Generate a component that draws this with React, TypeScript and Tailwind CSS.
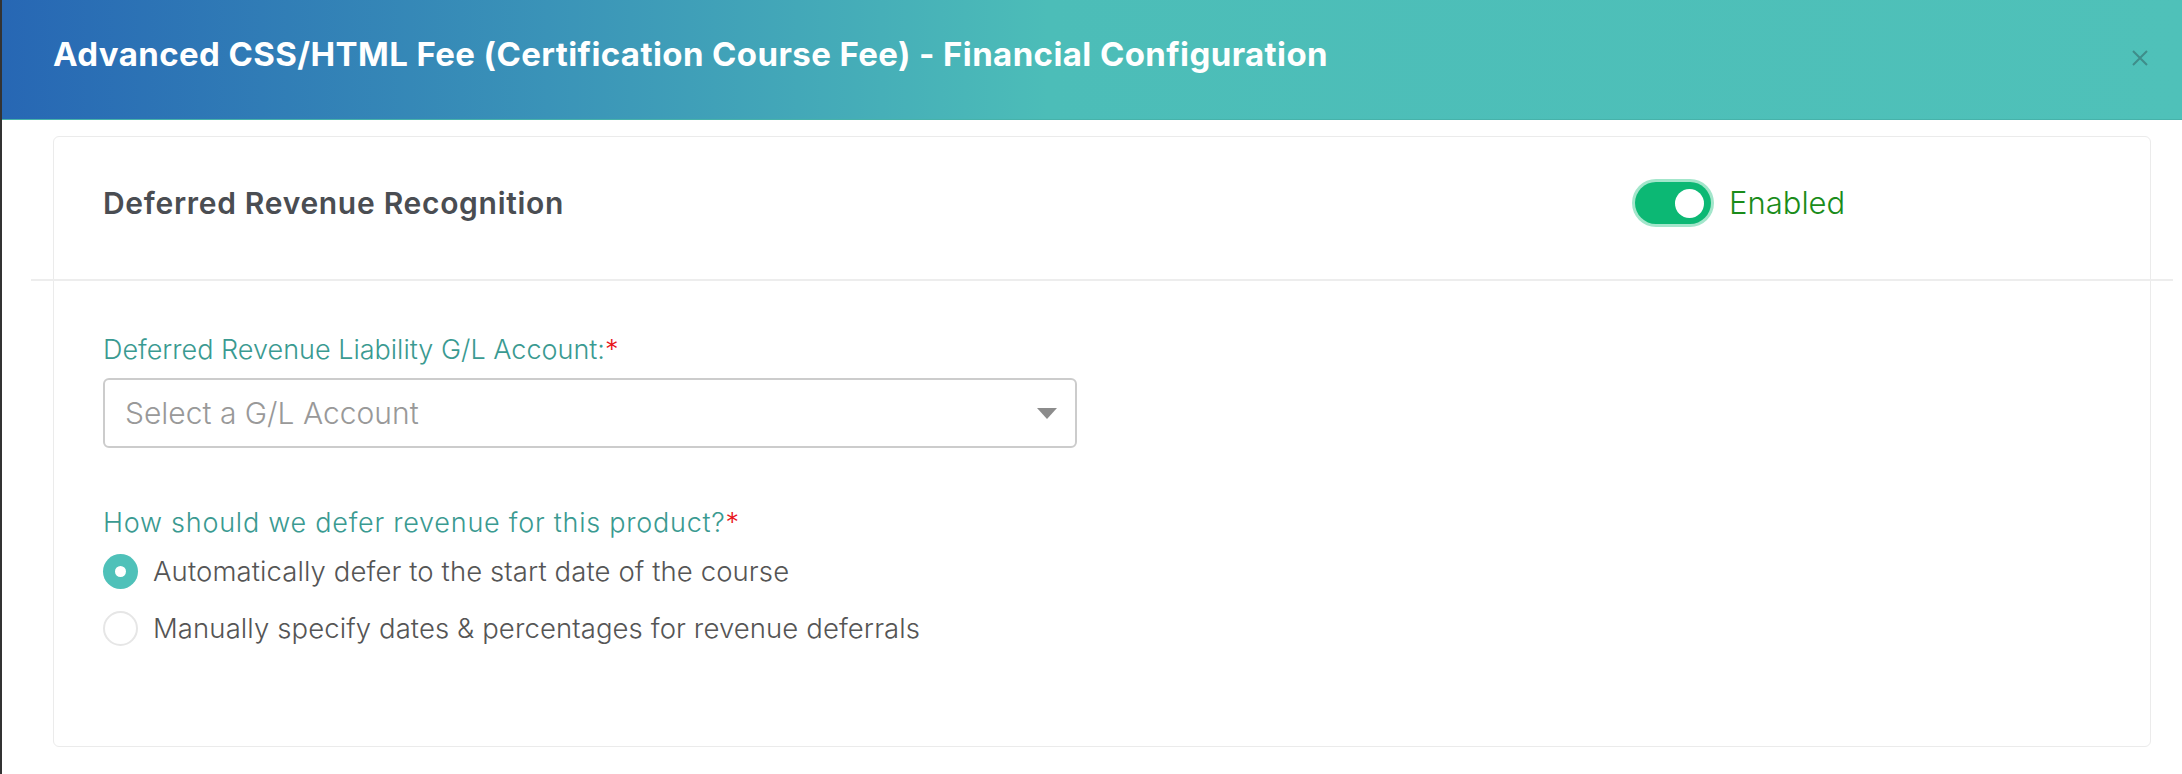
const font = { fontFamily: "Inter, 'Open Sans', sans-serif" };

function Toggle() {
  return (
    <div className="flex items-center">
      <div className="flex h-[42px] w-[76px] items-center justify-end rounded-full bg-[#0cb874] pr-[7px] ring-[3px] ring-[#a3e6cb]">
        <div className="h-[29px] w-[29px] rounded-full bg-white" />
      </div>
      <span className="ml-[18px] text-[31px] font-light leading-[40px] text-[#1a8c1a]">Enabled</span>
    </div>
  );
}

function Radio({ checked, label }: { checked?: boolean; label: string }) {
  return (
    <label className="flex h-[36px] items-center">
      {checked ? (
        <span className="flex h-[35px] w-[35px] items-center justify-center rounded-full bg-[#4fc1b9]">
          <span className="h-[11px] w-[11px] rounded-full bg-white" />
        </span>
      ) : (
        <span className="h-[35px] w-[35px] rounded-full border-2 border-[#e6e6e6]" />
      )}
      <span className="ml-[15px] text-[27.5px] font-light leading-[36px] tracking-[0.1px] text-[#555]">
        {label}
      </span>
    </label>
  );
}

export default function App() {
  return (
    <div className="min-h-[774px] w-full border-l-2 border-[#333] bg-white" style={font}>
      <header className="flex h-[120px] items-center justify-between border-b border-[#47b2aa] bg-[linear-gradient(to_right,#2767b4_0%,#3a93b8_25%,#4cbdb8_48%,#4fc1b9_100%)] pb-[12px] pl-[51px] pr-[34px]">
        <h1 className="text-[33px] font-bold leading-[44px] tracking-[0.4px] text-white">
          Advanced CSS/HTML Fee (Certification Course Fee) - Financial Configuration
        </h1>
        <svg width="16" height="16" viewBox="0 0 16 16" className="mt-[8px]">
          <path d="M1 1 L15 15 M15 1 L1 15" stroke="#3f8d8a" strokeWidth="2" />
        </svg>
      </header>

      <div className="pl-[51px] pr-[31px] pt-[16px]">
        <section className="h-[611px] rounded-[6px] border border-[#ebebeb]">
          <div className="grid h-[142px] grid-cols-[1532px_1fr] items-center pb-[10px] pl-[49px]">
            <h2 className="text-[30px] font-semibold leading-[40px] tracking-[0.7px] text-[#4a4d52]">
              Deferred Revenue Recognition
            </h2>
            <Toggle />
          </div>
          <div className="-mx-[23px] h-[2px] bg-[#ededed]" />

          <div className="pl-[49px] pt-[51px]">
            <p className="text-[27px] font-light leading-[36px] text-[#3a9a91]">
              Deferred Revenue Liability G/L Account:<span className="text-[#e8141b]">*</span>
            </p>
            <div className="mt-[10px] flex h-[70px] w-[974px] items-center justify-between rounded-[6px] border-2 border-[#cccccc] pl-[20px] pr-[18px]">
              <span className="text-[30px] font-light leading-[40px] text-[#999]">Select a G/L Account</span>
              <svg width="20" height="11" viewBox="0 0 20 11">
                <path d="M0 0 L20 0 L10 11 Z" fill="#8c8c8c" />
              </svg>
            </div>

            <p className="mt-[57px] text-[27px] font-light leading-[36px] tracking-[0.75px] text-[#3a9a91]">
              How should we defer revenue for this product?<span className="text-[#e8141b]">*</span>
            </p>
            <div className="mt-[12px] flex flex-col gap-[21px]">
              <Radio checked label="Automatically defer to the start date of the course" />
              <Radio label="Manually specify dates & percentages for revenue deferrals" />
            </div>
          </div>
        </section>
      </div>
    </div>
  );
}
